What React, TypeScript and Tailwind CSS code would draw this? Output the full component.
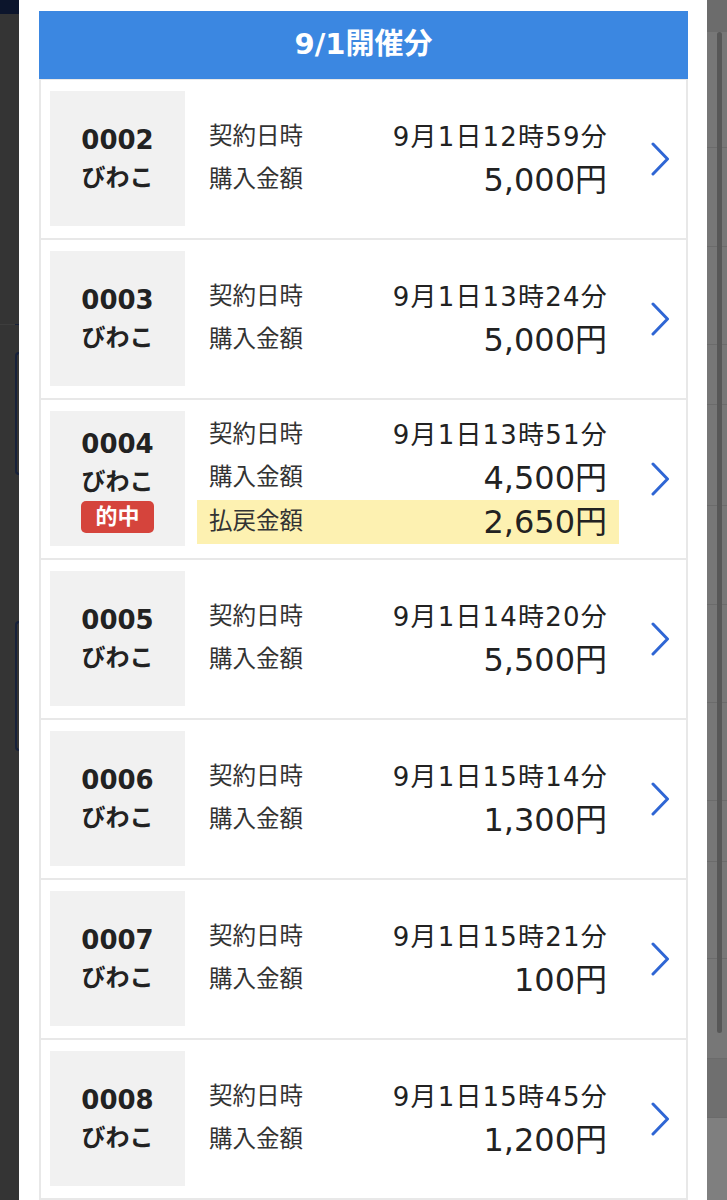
type Ticket = {
  no: string;
  place: string;
  time: string;
  amount: string;
  payout?: string;
};

const tickets: Ticket[] = [
  { no: "0002", place: "びわこ", time: "9月1日12時59分", amount: "5,000円" },
  { no: "0003", place: "びわこ", time: "9月1日13時24分", amount: "5,000円" },
  { no: "0004", place: "びわこ", time: "9月1日13時51分", amount: "4,500円", payout: "2,650円" },
  { no: "0005", place: "びわこ", time: "9月1日14時20分", amount: "5,500円" },
  { no: "0006", place: "びわこ", time: "9月1日15時14分", amount: "1,300円" },
  { no: "0007", place: "びわこ", time: "9月1日15時21分", amount: "100円" },
  { no: "0008", place: "びわこ", time: "9月1日15時45分", amount: "1,200円" },
];

// background page strip on the right, seen through the overlay
const rightBands = [
  { h: 32, c: "bg-[#6c6c6c]" },
  { h: 115, c: "bg-[#777777]" },
  { h: 99, c: "bg-[#777777]" },
  { h: 98, c: "bg-[#777777]" },
  { h: 60, c: "bg-[#777777]" },
  { h: 101, c: "bg-[#777777]" },
  { h: 99, c: "bg-[#777777]" },
  { h: 98, c: "bg-[#777777]" },
  { h: 98, c: "bg-[#777777]" },
  { h: 61, c: "bg-[#777777]" },
  { h: 97, c: "bg-[#777777]" },
  { h: 100, c: "bg-[#777777]" },
  { h: 59, c: "bg-[#6f6f6f]" },
  { h: 83, c: "bg-[#7f7f7f]" },
];

function Chevron() {
  return (
    <svg width="20" height="34" viewBox="0 0 20 34" fill="none">
      <path
        d="M3 2 L17.5 17 L3 32"
        stroke="#2f66d4"
        strokeWidth="3"
        strokeLinecap="round"
        strokeLinejoin="round"
      />
    </svg>
  );
}

function TicketRow({ t }: { t: Ticket }) {
  return (
    <div className="flex items-center border-b-2 border-[#e8e8e8] pt-[11px] pb-[12px]">
      <div className="ml-[9px] flex h-[135px] w-[135px] shrink-0 flex-col items-center justify-center bg-[#f1f1f1] font-bold text-[#222]">
        <div className="text-[26px] leading-[38px]">{t.no}</div>
        <div className="text-[24px] leading-[38px]">{t.place}</div>
        {t.payout && (
          <div className="flex h-[32px] w-[73px] items-center justify-center rounded-[5px] bg-[#d5443c] text-[22px] text-white">
            的中
          </div>
        )}
      </div>

      <div className="ml-[12px] w-[422px] shrink-0">
        <div className="flex h-[43px] items-center justify-between px-[12px]">
          <span className="text-[23.5px] text-[#333]">契約日時</span>
          <span className="mr-[-1px] text-[26px] tracking-[1.2px] text-[#222]">{t.time}</span>
        </div>
        <div className="flex h-[43px] items-center justify-between px-[12px]">
          <span className="text-[23.5px] text-[#333]">購入金額</span>
          <span className="text-[32px] text-[#222]">{t.amount}</span>
        </div>
        {t.payout && (
          <div className="flex h-[44px] items-center justify-between bg-[#fdf1b1] px-[12px]">
            <span className="text-[23.5px] text-[#333]">払戻金額</span>
            <span className="text-[32px] text-[#222]">{t.payout}</span>
          </div>
        )}
      </div>

      <div className="pl-[31px]">
        <Chevron />
      </div>
    </div>
  );
}

export default function App() {
  return (
    <div className="flex h-[1200px] w-[727px] overflow-hidden font-['DejaVu_Sans','Noto_Sans_CJK_JP',sans-serif]">
      {/* dimmed page on the left */}
      <div className="flex w-[19px] shrink-0 flex-col bg-[#343434]">
        <div className="h-[14px] bg-[#0c152c]" />
        <div className="h-[310px]" />
        <div className="flex h-[1px] bg-[#3d3d3d]">
          <div className="ml-[15px] flex-1 bg-[#17213a]" />
        </div>
        <div className="h-[27px]" />
        <div className="ml-[15px] h-[123px] rounded-l-md border-y-2 border-l-2 border-[#17213a]" />
        <div className="h-[146px]" />
        <div className="ml-[15px] h-[130px] rounded-l-md border-y-2 border-l-2 border-[#17213a]" />
      </div>

      {/* modal panel */}
      <div className="w-[688px] shrink-0 bg-white pl-[20px] pr-[19px] pt-[11px]">
        <div className="flex h-[68px] items-center justify-center bg-[#3b87e1] text-[29px] font-bold text-white">
          9/1開催分
        </div>
        <div className="border-x-2 border-t border-[#e8e8e8]">
          {tickets.map((t) => (
            <TicketRow key={t.no} t={t} />
          ))}
        </div>
      </div>

      {/* dimmed page on the right with scrollbar */}
      <div className="relative flex-1 bg-[#777777]">
        {rightBands.map((b, i) => (
          <div
            key={i}
            className={`${b.c} ${i > 1 ? "border-t border-[#6b6b6b]" : ""}`}
            style={{ height: b.h }}
          />
        ))}
        <div className="absolute left-[10px] top-[32px] h-[1001px] w-[5px] rounded-full bg-[#575757]" />
      </div>
    </div>
  );
}
